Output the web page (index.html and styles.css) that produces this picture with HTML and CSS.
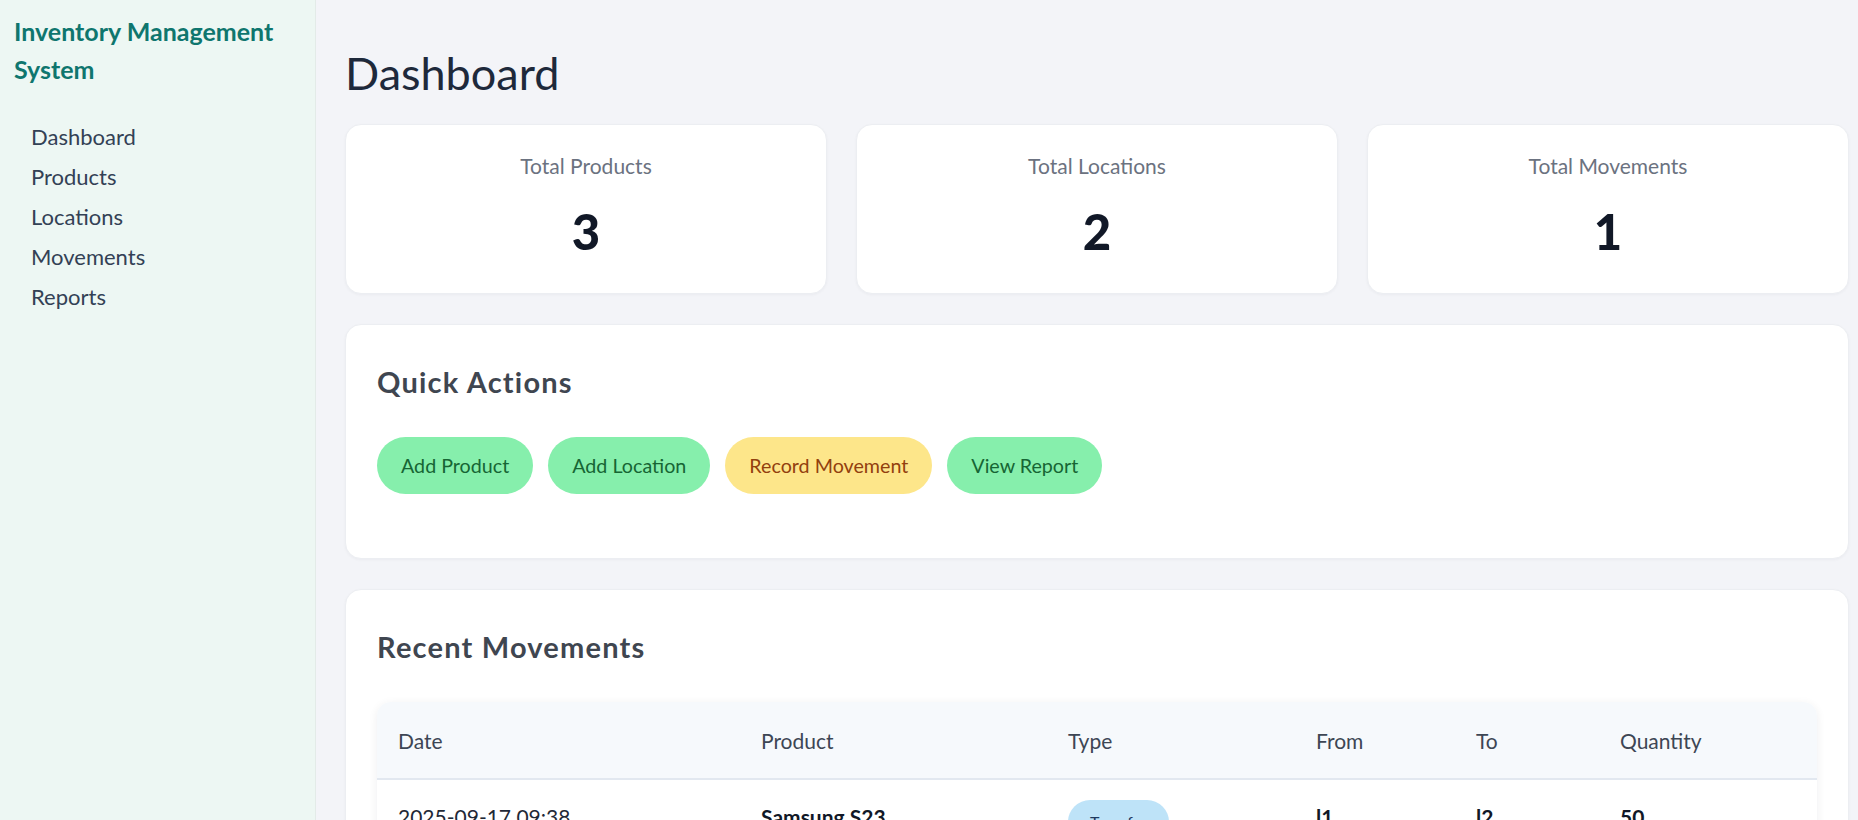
FILE: index.html
```html
<!DOCTYPE html>
<html lang="en">
<head>
<meta charset="utf-8">
<title>Inventory Management System</title>
<link rel="stylesheet" href="styles.css">
</head>
<body>
<div class="app">
  <aside class="sidebar">
    <div class="brand">Inventory Management System</div>
    <nav class="nav">
      <a class="nav-item" href="#">Dashboard</a>
      <a class="nav-item" href="#">Products</a>
      <a class="nav-item" href="#">Locations</a>
      <a class="nav-item" href="#">Movements</a>
      <a class="nav-item" href="#">Reports</a>
    </nav>
  </aside>
  <main class="main">
    <h1 class="page-title">Dashboard</h1>
    <section class="stats">
      <div class="stat-card">
        <div class="stat-label">Total Products</div>
        <div class="stat-value">3</div>
      </div>
      <div class="stat-card">
        <div class="stat-label">Total Locations</div>
        <div class="stat-value">2</div>
      </div>
      <div class="stat-card">
        <div class="stat-label">Total Movements</div>
        <div class="stat-value">1</div>
      </div>
    </section>
    <section class="panel panel-actions">
      <h2 class="panel-title">Quick Actions</h2>
      <div class="actions">
        <a class="btn btn-green" href="#">Add Product</a>
        <a class="btn btn-green" href="#">Add Location</a>
        <a class="btn btn-yellow" href="#">Record Movement</a>
        <a class="btn btn-green" href="#">View Report</a>
      </div>
    </section>
    <section class="panel">
      <h2 class="panel-title">Recent Movements</h2>
      <div class="table-wrap">
        <table class="table">
          <colgroup>
            <col class="c-date"><col class="c-product"><col class="c-type"><col class="c-from"><col class="c-to"><col class="c-qty">
          </colgroup>
          <thead>
            <tr><th>Date</th><th>Product</th><th>Type</th><th>From</th><th>To</th><th>Quantity</th></tr>
          </thead>
          <tbody>
            <tr>
              <td>2025-09-17 09:38</td>
              <td class="strong">Samsung S23</td>
              <td><span class="badge">Transfer</span></td>
              <td class="strong">l1</td>
              <td class="strong">l2</td>
              <td class="strong">50</td>
            </tr>
          </tbody>
        </table>
      </div>
    </section>
  </main>
</div>
</body>
</html>
```
FILE: styles.css
```css
* { box-sizing: border-box; }
html, body { margin: 0; padding: 0; }
body {
  font-family: Lato, "Noto Sans", "Open Sans", sans-serif;
  background: #f3f4f8;
  color: #1f2937;
}
.app {
  display: flex;
  height: 100vh;
  overflow: hidden;
}
.sidebar {
  width: 316px;
  flex: 0 0 316px;
  background: #edf7f3;
  border-right: 1px solid #e3ebe8;
  padding: 12px 14px;
}
.brand {
  font-size: 25px;
  line-height: 38px;
  font-weight: 700;
  color: #0f766e;
}
.nav {
  display: flex;
  flex-direction: column;
  margin-top: 29px;
  padding-left: 17px;
}
.nav-item {
  font-size: 22px;
  line-height: 40px;
  color: #334155;
  text-decoration: none;
}
.main {
  flex: 1;
  padding: 46px 9px 0 29px;
  min-width: 0;
}
.page-title {
  margin: 0 0 24px;
  font-size: 45px;
  line-height: 54px;
  font-weight: 400;
  color: #1e293b;
}
.stats {
  display: grid;
  grid-template-columns: repeat(3, 1fr);
  gap: 29px;
}
.stat-card {
  background: #fff;
  border: 1px solid #eceef2;
  border-radius: 16px;
  box-shadow: 0 1px 3px rgba(15, 23, 42, 0.04);
  height: 170px;
  display: flex;
  flex-direction: column;
  align-items: center;
  padding-top: 27px;
}
.stat-label {
  font-size: 21px;
  line-height: 28px;
  color: #6b7280;
}
.stat-value {
  margin-top: 22px;
  font-size: 49px;
  line-height: 58px;
  font-weight: 900;
  color: #111827;
}
.panel {
  background: #fff;
  border: 1px solid #eceef2;
  border-radius: 16px;
  box-shadow: 0 1px 3px rgba(15, 23, 42, 0.04);
  margin-top: 30px;
  padding: 39px 31px 32px;
}
.panel-actions { height: 235px; }
.panel-title {
  margin: 0 0 37px;
  font-size: 29px;
  line-height: 36px;
  font-weight: 700;
  letter-spacing: 1.2px;
  color: #3f4650;
}
.actions {
  display: flex;
  gap: 15px;
}
.btn {
  display: inline-flex;
  align-items: center;
  height: 57px;
  padding: 0 24px;
  border-radius: 29px;
  font-size: 19.7px;
  text-decoration: none;
}
.btn-green { background: #86efac; color: #166534; }
.btn-yellow { background: #fde68a; color: #92400e; }
.table-wrap {
  border-radius: 14px;
  overflow: hidden;
  box-shadow: 0 2px 10px rgba(15, 23, 42, 0.07);
}
.table {
  width: 100%;
  border-collapse: collapse;
  table-layout: fixed;
}
.c-date { width: 363px; }
.c-product { width: 307px; }
.c-type { width: 248px; }
.c-from { width: 160px; }
.c-to { width: 144px; }
.c-qty { width: auto; }
.table th {
  background: #f6f9fc;
  text-align: left;
  font-weight: 400;
  font-size: 21px;
  color: #3d4654;
  height: 77px;
  padding: 0 21px;
  border-bottom: 2px solid #e2e8f0;
}
.table td {
  font-size: 21px;
  color: #1f2937;
  padding: 22px 21px;
  height: 80px;
  vertical-align: top;
  line-height: 30px;
}
.table td.strong { font-weight: 700; color: #111827; }
.badge {
  display: inline-block;
  background: #bee3f8;
  color: #1e3a5f;
  font-size: 16px;
  line-height: 44px;
  padding: 0 22px;
  border-radius: 22px;
  margin-top: -2px;
}
```
